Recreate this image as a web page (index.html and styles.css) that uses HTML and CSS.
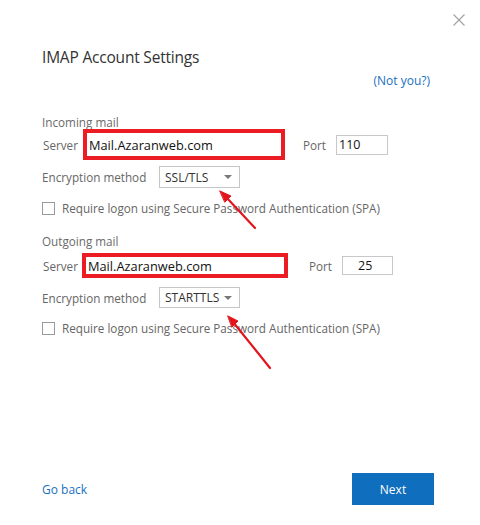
FILE: index.html
```html
<!DOCTYPE html>
<html>
<head>
<meta charset="utf-8">
<link rel="stylesheet" href="styles.css">
</head>
<body>
<div class="dialog">
  <div class="topbar">
    <svg class="close" width="12" height="12" viewBox="0 0 12 12"><path d="M0.5 0.5 L11.5 11.5 M11.5 0.5 L0.5 11.5" stroke="#a0a0a0" stroke-width="1.1" fill="none"/></svg>
  </div>
  <h1 class="title">IMAP Account Settings</h1>
  <div class="notyou-row"><a class="link">(Not you?)</a></div>

  <section class="group group-in">
    <div class="group-title">Incoming mail</div>
    <div class="row server-row">
      <span class="label label-server">Server</span>
      <div class="field server-in">Mail.Azaranweb.com</div>
      <span class="label port-label">Port</span>
      <div class="port port-in">110</div>
    </div>
    <div class="row enc-row">
      <span class="label label-enc">Encryption method</span>
      <div class="select"><span>SSL/TLS</span><span class="caret"></span></div>
    </div>
    <div class="row check-row">
      <span class="checkbox"></span>
      <span class="label">Require logon using Secure Password Authentication (SPA)</span>
    </div>
  </section>

  <section class="group group-out">
    <div class="group-title">Outgoing mail</div>
    <div class="row server-row">
      <span class="label label-server">Server</span>
      <div class="field server-out">Mail.Azaranweb.com</div>
      <span class="label port-label port-label-out">Port</span>
      <div class="port port-out">25</div>
    </div>
    <div class="row enc-row">
      <span class="label label-enc">Encryption method</span>
      <div class="select"><span>STARTTLS</span><span class="caret"></span></div>
    </div>
    <div class="row check-row">
      <span class="checkbox"></span>
      <span class="label">Require logon using Secure Password Authentication (SPA)</span>
    </div>
  </section>

  <div class="footer">
    <a class="link back">Go back</a>
    <button class="next">Next</button>
  </div>

  <svg class="arrows" width="480" height="525" viewBox="0 0 480 525">
    <g stroke="#e3151c" stroke-width="2.2" fill="#e3151c" stroke-linecap="round">
      <line x1="255" y1="228" x2="226" y2="197"/>
      <polygon points="220,191 231,196 225,202" stroke-width="1"/>
      <line x1="270" y1="368" x2="233" y2="322"/>
      <polygon points="228,316 238,321 232,327" stroke-width="1"/>
    </g>
  </svg>
</div>
</body>
</html>
```

FILE: styles.css
```css
html, body {
  margin: 0;
  padding: 0;
  background: #ffffff;
}
body {
  font-family: "Open Sans", "Noto Sans", sans-serif;
  color: #666666;
}
.dialog {
  position: relative;
  width: 480px;
  height: 525px;
  box-sizing: border-box;
  padding: 0 0 0 42px;
  display: flex;
  flex-direction: column;
}
.topbar {
  height: 36px;
  display: flex;
  justify-content: flex-end;
  align-items: flex-end;
  padding-right: 15px;
}
.close {
  display: block;
  margin-bottom: 10px;
}
.title {
  margin: 9px 0 0 0;
  font-size: 15.5px;
  font-weight: 400;
  color: #333333;
  line-height: 24px;
  letter-spacing: -0.2px;
}
.notyou-row {
  display: flex;
  justify-content: flex-end;
  padding-right: 50px;
  margin-top: -1px;
  height: 24px;
  align-items: center;
}
.link {
  color: #1a6fc0;
  font-size: 12px;
  cursor: pointer;
}
.group {
  display: flex;
  flex-direction: column;
}
.group-in {
  margin-top: 23px;
}
.group-out {
  margin-top: 15px;
}
.group-title {
  font-size: 11.7px;
  height: 14px;
  line-height: 14px;
  color: #6a6a6a;
}
.row {
  display: flex;
  align-items: center;
}
.label {
  font-size: 11.7px;
  color: #666666;
  white-space: nowrap;
}
.label-server {
  width: 40px;
  margin-left: 1px;
}
.field {
  box-sizing: border-box;
  border: 4px solid #ec1c24;
  color: #111111;
  font-size: 12.8px;
  display: flex;
  align-items: center;
  padding-left: 2px;
}
.group-in .server-row {
  height: 31px;
}
.server-in {
  width: 202px;
  height: 31px;
}
.server-out {
  width: 206px;
  height: 25px;
  margin-left: -1px;
}
.port-label {
  margin-left: 18px;
  width: 33px;
}
.port-label-out {
  margin-left: 21px;
}
.port {
  box-sizing: border-box;
  border: 1px solid #c8c8c8;
  font-size: 12.5px;
  color: #111;
  display: flex;
  align-items: center;
}
.port-in {
  width: 52px;
  height: 20px;
  padding-left: 2px;
}
.port-out {
  width: 51px;
  height: 19px;
  padding-left: 15px;
}
.group-out .server-row {
  height: 25px;
  margin-top: 5px;
}
.enc-row {
  height: 22px;
}
.group-in .enc-row {
  margin-top: 6px;
}
.group-out .enc-row {
  margin-top: 9px;
  height: 21px;
}
.label-enc {
  width: 117px;
}
.select {
  box-sizing: border-box;
  width: 81px;
  height: 100%;
  border: 1px solid #c6c6c6;
  display: flex;
  align-items: center;
  justify-content: space-between;
  padding: 0 7px 0 5px;
  font-size: 12px;
  color: #333333;
}
.caret {
  width: 0;
  height: 0;
  border-left: 4px solid transparent;
  border-right: 4px solid transparent;
  border-top: 4px solid #777777;
}
.check-row {
  margin-top: 9px;
  height: 22px;
}
.checkbox {
  box-sizing: border-box;
  width: 13px;
  height: 13px;
  border: 1px solid #9a9a9a;
  margin-right: 7px;
}
.footer {
  margin-top: auto;
  margin-bottom: 20px;
  display: flex;
  justify-content: space-between;
  align-items: center;
  padding-right: 46px;
}
.back {
  font-size: 12px;
}
.next {
  width: 82px;
  height: 32px;
  border: none;
  background: #106ebe;
  color: #ffffff;
  font-family: "Open Sans", "Noto Sans", sans-serif;
  font-size: 12px;
}
.arrows {
  position: absolute;
  left: 0;
  top: 0;
  pointer-events: none;
}
```
